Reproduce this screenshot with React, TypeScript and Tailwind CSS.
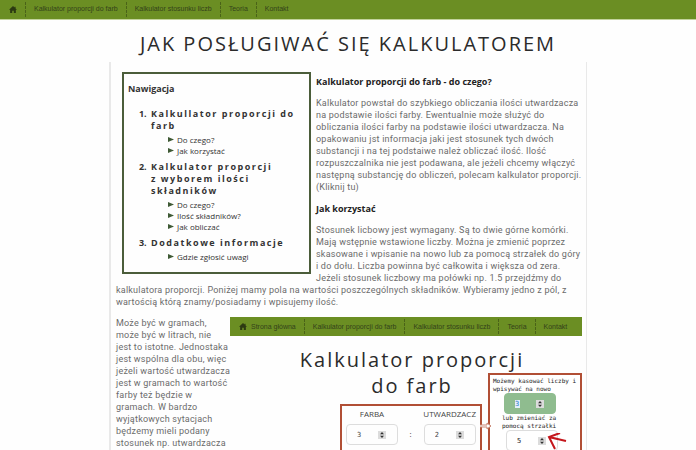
import { Fragment } from "react";

const navSections = [
  { title: ["Kalkullator proporcji do", "farb"], links: ["Do czego?", "Jak korzystać"] },
  { title: ["Kalkulator proporcji", "z wyborem ilości", "składników"], links: ["Do czego?", "Ilość składników?", "Jak obliczać"] },
  { title: ["Dodatkowe informacje"], links: ["Gdzie zgłosić uwagi"] },
];

const unitsNote = [
  "Może być w gramach,",
  "może być w litrach, nie",
  "jest to istotne. Jednostaka",
  "jest wspólna dla obu, więc",
  "jeżeli wartość utwardzacza",
  "jest w gramach to wartość",
  "farby też będzie w",
  "gramach. W bardzo",
  "wyjątkowych sytacjach",
  "będzemy mieli podany",
  "stosunek np. utwardzacza",
  "na proporcje ilości farby.",
];

function Lines({ lines }: { lines: string[] }) {
  return (
    <>
      {lines.map((line, i) => (
        <Fragment key={line}>
          {i > 0 && <br />}
          {line}
        </Fragment>
      ))}
    </>
  );
}

function HomeIcon() {
  return (
    <svg viewBox="0 0 14 12" className="h-[7px] w-2 shrink-0 fill-[#2c3a12]" aria-hidden="true">
      <path d="M7 0 0 6.5h2V12h3.6V8h2.8v4H12V6.5h2L11.5 4.2V1H9.8v1.6z" />
    </svg>
  );
}

function MenuBar({ home }: { home?: string }) {
  const links = ["Kalkulator proporcji do farb", "Kalkulator stosunku liczb", "Teoria", "Kontakt"];
  return (
    <nav className="flex h-[19px] items-center bg-[#6b8e23] pl-px font-['Liberation_Sans',Arial,sans-serif] text-[7px] whitespace-nowrap text-[#33421a]">
      <a href="#home" aria-label="Strona główna" className="flex h-[15px] items-center gap-1 px-2">
        <HomeIcon />
        {home}
      </a>
      {links.map((link) => (
        <a key={link} href="#menu" className="flex h-[15px] items-center border-l border-dashed border-[#4a6318] px-2">
          {link}
        </a>
      ))}
    </nav>
  );
}

function Spinner() {
  return (
    <svg viewBox="0 0 8 8" className="size-2 shrink-0" aria-hidden="true">
      <path fill="#dcdcdc" d="M0 0h8v8H0z" />
      <path fill="#333" d="M4 1 6 3.3H2zM4 7 2 4.7h4z" />
    </svg>
  );
}

function NumberBox({ label, value, className, inputClassName = "" }: { label: string; value: number; className: string; inputClassName?: string }) {
  return (
    <span className={`flex h-[21px] w-[52px] items-center justify-between rounded-sm border pr-[11px] pl-[10px] ${className}`}>
      <input
        type="number"
        aria-label={label}
        defaultValue={value}
        className={`w-[5px] appearance-none font-['DejaVu_Sans_Mono',monospace] text-[7px] leading-2 [appearance:textfield] [&::-webkit-inner-spin-button]:hidden ${inputClassName}`}
      />
      <Spinner />
    </span>
  );
}

function Example() {
  return (
    <div className="relative min-w-0 flex-1 font-['Open_Sans',sans-serif] tracking-normal">
      <MenuBar home="Strona główna" />
      <h2 className="mt-[11px] pl-3 text-center text-[20px] leading-[26px] tracking-[2px] text-[#2b2b2b]">
        Kalkulator proporcji
        <br />
        do farb
      </h2>
      <div className="mt-[5px] ml-[110px] flex h-[60px] w-[142px] justify-between border-2 border-[#b14f35] px-1 pt-0.5 text-[8px] leading-3 text-[#444]">
        <div className="flex flex-col items-center gap-1">
          FARBA
          <NumberBox label="Farba" value={3} className="border-[#ddd]" />
        </div>
        <span className="pt-5">:</span>
        <div className="flex flex-col items-center gap-1">
          UTWARDZACZ
          <NumberBox label="Utwardzacz" value={2} className="border-[#ddd]" />
        </div>
      </div>
      <div className="absolute top-14 right-0 h-28 w-[94px] border-2 border-[#b14f35] bg-white px-[3px] pt-0.5 font-['DejaVu_Sans_Mono',monospace] text-[6px] leading-2 whitespace-nowrap text-[#222]">
        Możemy kasować liczby i
        <br />
        wpisywać na nowo
        <NumberBox
          label="Nowa liczba"
          value={3}
          className="ml-[11px] border-[#8fbc8f] bg-[#8fbc8f]"
          inputClassName="bg-[#e3effa] text-[#2878c8]"
        />
        <p className="pl-[9px]">
          lub zmieniać za
          <br />
          pomocą strzałki
        </p>
        <NumberBox label="Zmiana strzałką" value={5} className="ml-[13px] border-[#ddd]" />
        <svg viewBox="0 0 20 20" className="absolute top-[58px] left-[57px] size-5 fill-none stroke-[#c4161c] stroke-2" aria-hidden="true">
          <path d="M19 8 2 4M13 0 2 4l6 12" />
        </svg>
      </div>
      <svg viewBox="0 0 12 8" className="absolute top-[105px] left-[250px] h-2 w-3 fill-white stroke-[#c98572]" aria-hidden="true">
        <path d="M0 3h7V1l4 3-4 3V5H0" />
      </svg>
    </div>
  );
}

export default function App() {
  return (
    <div className="h-screen overflow-hidden bg-[#fefefe] font-['Open_Sans',sans-serif]">
      <MenuBar />
      <h1 className="border-t border-[#c3d39c] pt-2.5 pb-1 text-center text-[20px] leading-7 tracking-[2px] text-[#2b2b2b]">
        JAK POSŁUGIWAĆ SIĘ KALKULATOREM
      </h1>
      <main className="mx-auto max-w-[478px] border-r border-l-2 border-[#e9e9e9] pt-2.5 pr-1 pb-6 pl-[5px] font-[Roboto,sans-serif] text-[9px] leading-3 tracking-wide text-[#6b6b6b]">
        <nav className="float-left mr-[5px] mb-0.5 ml-1.5 w-[189px] border-2 border-[#4b5d3a] pt-[9px] pr-2 pb-[5px] pl-1 font-['Open_Sans',sans-serif] tracking-normal text-[#333]">
          <h2 className="font-bold">Nawigacja</h2>
          <ol className="mt-[13px] ml-[21px] list-decimal text-[9px] font-bold">
            {navSections.map((section) => (
              <li key={section.title[0]} className="mb-[5px] pl-0.5">
                <a href="#section" className="block tracking-[0.17em] whitespace-nowrap">
                  <Lines lines={section.title} />
                </a>
                <ul className="mt-0.5 pl-[17px] text-[8px] leading-[11px] font-normal">
                  {section.links.map((link) => (
                    <li key={link} className="flex items-center gap-[3px]">
                      <svg viewBox="0 0 6 5" className="h-[5px] w-1.5 fill-[#3f5a35]" aria-hidden="true">
                        <path d="m0 0 6 2.5L0 5z" />
                      </svg>
                      <a href="#topic">{link}</a>
                    </li>
                  ))}
                </ul>
              </li>
            ))}
          </ol>
        </nav>
        <h3 className="pt-1 font-['Open_Sans',sans-serif] font-bold tracking-normal text-[#222]">
          Kalkulator proporcji do farb - do czego?
        </h3>
        <p className="mt-[9px]">
          Kalkulator powstał do szybkiego obliczania ilości utwardzacza na podstawie ilości farby. Ewentualnie może służyć do
          obliczania ilości farby na podstawie ilości utwardzacza. Na opakowaniu jst informacja jaki jest stosunek tych dwóch
          substancji i na tej podstaiwe należ obliczać ilość. Ilość rozpuszczalnika nie jest podawana, ale jeżeli chcemy włączyć
          następną substancję do obliczeń, polecam kalkulator proporcji. <a href="#kalkulator">(Kliknij tu)</a>
        </p>
        <h3 className="mt-2.5 font-['Open_Sans',sans-serif] font-bold tracking-normal text-[#222]">Jak korzystać</h3>
        <p className="mt-[9px]">
          Stosunek licbowy jest wymagany. Są to dwie górne komórki. Mają wstępnie wstawione liczby. Można je zmienić poprzez
          skasowane i wpisanie na nowo lub za pomocą strzałek do góry i do dołu. Liczba powinna być całkowita i większa od zera.
          Jeżeli stosunek liczbowy ma połówki np. 1.5 przejdźmy do kalkulatora proporcji. Poniżej mamy pola na wartości
          poszczególnych składników. Wybieramy jedno z pól, z wartością którą znamy/posiadamy i wpisujemy ilość.
        </p>
        <div className="mt-[9px] flex">
          <p className="w-[114px] shrink-0 whitespace-nowrap">
            <Lines lines={unitsNote} />
          </p>
          <Example />
        </div>
      </main>
    </div>
  );
}
